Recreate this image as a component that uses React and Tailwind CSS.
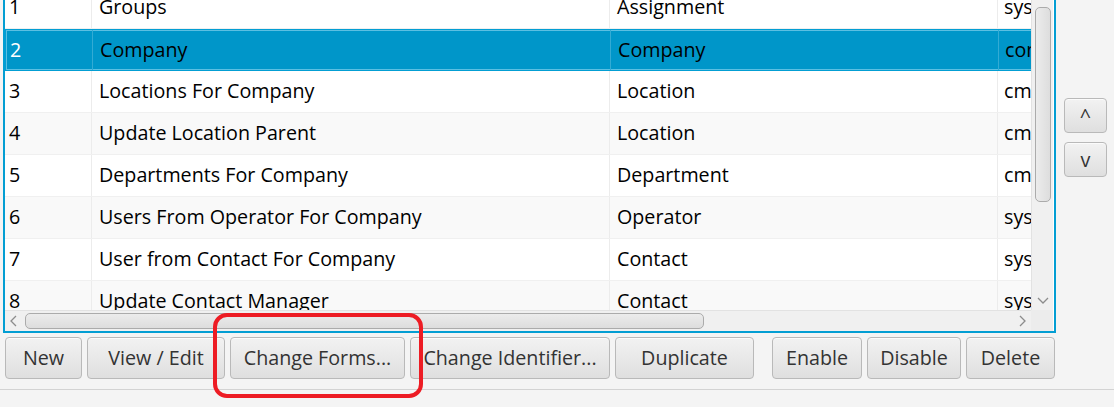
import React from "react";

const rows = [
  ["1", "Groups", "Assignment", "system"],
  ["2", "Company", "Company", "company"],
  ["3", "Locations For Company", "Location", "cmdb"],
  ["4", "Update Location Parent", "Location", "cmdb"],
  ["5", "Departments For Company", "Department", "cmdb"],
  ["6", "Users From Operator For Company", "Operator", "system"],
  ["7", "User from Contact For Company", "Contact", "system"],
  ["8", "Update Contact Manager", "Contact", "system"],
];

function Row({ r, i }) {
  const selected = i === 1;
  const bg = selected ? "bg-[#0096c9]" : i % 2 === 0 ? "bg-white" : "bg-[#f9f9f9]";
  const cellBorder = selected ? "border-[#33abd4]" : "border-[#ececec]";
  return (
    <div
      className={`flex h-[42px] shrink-0 ${bg} ${
        selected
          ? "border border-[#039ed3] shadow-[inset_0_0_0_1px_#5cbfe2]"
          : "border-b border-[#f0f0f0]"
      }`}
    >
      <div className={`w-[87px] shrink-0 border-r ${cellBorder} flex items-center pb-[1px] pl-[4px] ${selected ? "text-white" : "text-black"}`}>
        {r[0]}
      </div>
      <div className={`w-[518px] shrink-0 border-r ${cellBorder} flex items-center pb-[1px] pl-[7px] text-black`}>
        {r[1]}
      </div>
      <div className={`w-[388px] shrink-0 border-r ${cellBorder} flex items-center pb-[1px] pl-[7px] text-black`}>
        {r[2]}
      </div>
      <div className="w-[200px] shrink-0 flex items-center pb-[1px] pl-[6px] text-black">{r[3]}</div>
    </div>
  );
}

function Btn({ w, children }) {
  return (
    <div
      className={`${w} h-[42px] shrink-0 rounded-[4px] border border-[#b9b9b9] bg-linear-to-b from-[#f2f2f2] to-[#dfdfdf] shadow-[inset_0_1px_0_#fbfbfb] text-[#333333] flex items-center justify-center whitespace-nowrap`}
    >
      {children}
    </div>
  );
}

export default function App() {
  return (
    <div className="w-[1114px] h-[407px] bg-[#f4f4f4] relative overflow-hidden font-['Open_Sans',sans-serif] text-[19.7px] leading-none">
      <div className="flex h-[333px]">
        <div className="ml-[3px] w-[1053px] h-[333px] border-x-2 border-b-2 border-[#039ed3] bg-white flex flex-col">
          <div className="flex h-[310px]">
            <div className="w-[1026px] h-[310px] overflow-hidden">
              <div className="-mt-[13px] flex flex-col w-[1200px]">
                {rows.map((r, i) => (
                  <Row key={i} r={r} i={i} />
                ))}
              </div>
            </div>
            <div className="w-[22px] h-[310px] bg-[#f0f0f0] border-l border-[#e2e2e2] flex flex-col items-center">
              <div className="mt-[7px] w-[16px] h-[195px] rounded-[5px] border border-[#ababab] bg-linear-to-r from-[#ececec] to-[#dddddd]" />
              <div className="flex-1" />
              <svg width="12" height="8" viewBox="0 0 12 8" className="mb-[5px]">
                <path d="M1 1 L6 6 L11 1" fill="none" stroke="#8c8c8c" strokeWidth="1.3" />
              </svg>
            </div>
          </div>
          <div className="flex h-[21px]">
            <div className="w-[1026px] h-[21px] bg-[#f0f0f0] border-t border-[#e2e2e2] flex items-center">
              <svg width="8" height="12" viewBox="0 0 8 12" className="ml-[4px]">
                <path d="M7 1 L2 6 L7 11" fill="none" stroke="#8c8c8c" strokeWidth="1.3" />
              </svg>
              <div className="ml-[8px] w-[679px] h-[16px] rounded-[5px] border border-[#ababab] bg-linear-to-b from-[#ececec] to-[#dddddd]" />
              <div className="flex-1" />
              <svg width="8" height="12" viewBox="0 0 8 12" className="mr-[4px]">
                <path d="M1 1 L6 6 L1 11" fill="none" stroke="#8c8c8c" strokeWidth="1.3" />
              </svg>
            </div>
            <div className="w-[22px] h-[21px] bg-[#ececec]" />
          </div>
        </div>
        <div className="flex flex-col pl-[8px] pt-[98px] gap-[9px]">
          <Btn w="w-[43px] !h-[35px]">^</Btn>
          <Btn w="w-[43px] !h-[35px]">v</Btn>
        </div>
      </div>
      <div className="mt-[4px] flex gap-[5px] pl-[5px]">
        <Btn w="w-[77px]">New</Btn>
        <Btn w="w-[138px]">View / Edit</Btn>
        <Btn w="w-[175px]">Change Forms...</Btn>
        <Btn w="w-[200px]">Change Identifier...</Btn>
        <Btn w="w-[139px]">Duplicate</Btn>
        <Btn w="w-[90px] ml-[13px]">Enable</Btn>
        <Btn w="w-[94px]">Disable</Btn>
        <Btn w="w-[89px]">Delete</Btn>
      </div>
      <div className="mt-[10px] h-px bg-[#d3d3d3]" />
      <div className="absolute left-[213px] top-[313px] w-[210px] h-[85px] rounded-[14px] border-[4px] border-[#ed1c24]" />
    </div>
  );
}
